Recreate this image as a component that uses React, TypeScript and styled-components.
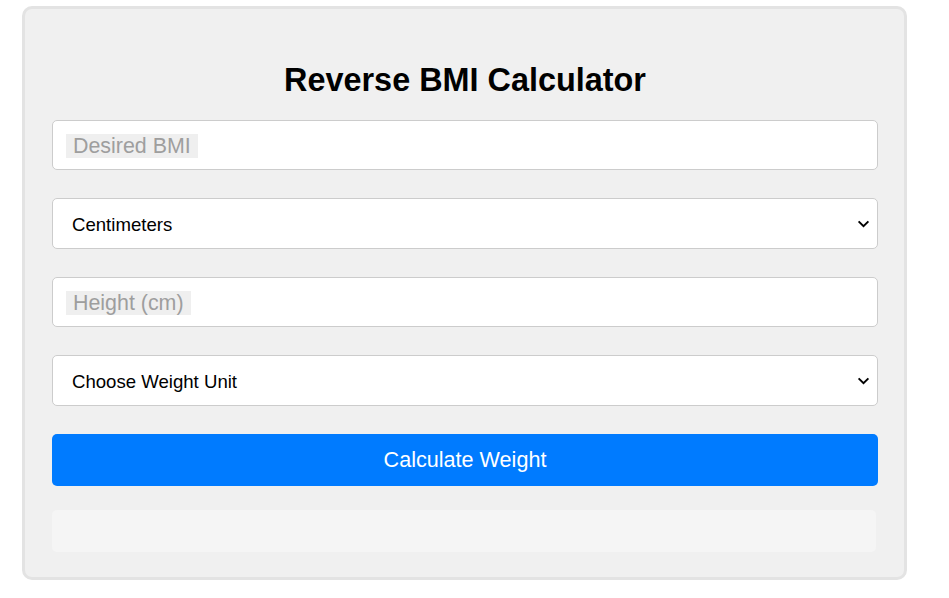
import React from "react";
import styled, { createGlobalStyle } from "styled-components";

const GlobalStyle = createGlobalStyle`
  html, body {
    margin: 0;
    padding: 0;
    background: #ffffff;
    font-family: "Liberation Sans", Arial, sans-serif;
  }
`;

const Page = styled.div`
  padding: 6px 0 0 22px;
`;

const Card = styled.div`
  box-sizing: border-box;
  width: 885px;
  background: #f0f0f0;
  border: 3px solid #e3e3e3;
  border-radius: 10px;
  padding: 30px 26px 25px 27px;
  display: flex;
  flex-direction: column;
`;

const Title = styled.h1`
  margin: 23px 0 21px;
  font-size: 32.4px;
  line-height: 37px;
  font-weight: 700;
  text-align: center;
  color: #000;
`;

const Form = styled.div`
  display: flex;
  flex-direction: column;
  gap: 28px;
`;

const TextInput = styled.input<{ $hint: number }>`
  box-sizing: border-box;
  width: 100%;
  height: 50px;
  padding: 2px 13px 0;
  border: 1px solid #cccccc;
  border-radius: 5px;
  background: #ffffff;
  font-family: "Liberation Sans", Arial, sans-serif;
  font-size: 21.4px;
  color: #000;
  outline: none;
  &::placeholder {
    color: #9e9e9e;
    padding-left: 7px;
    background: linear-gradient(#efefef, #efefef) no-repeat left center /
      ${(p) => p.$hint}px 24px;
  }
`;

const chevron =
  "url(\"data:image/svg+xml;utf8,<svg xmlns='http://www.w3.org/2000/svg' width='14' height='9' viewBox='0 0 14 9'><path d='M1.5 1.5 L7 7 L12.5 1.5' fill='none' stroke='black' stroke-width='2.2'/></svg>\")";

const Select = styled.select`
  box-sizing: border-box;
  width: 100%;
  height: 51px;
  padding: 1px 40px 0 19px;
  border: 1px solid #cccccc;
  border-radius: 5px;
  appearance: none;
  -webkit-appearance: none;
  background: #ffffff ${chevron} no-repeat right 7px center / 13px 8px;
  font-family: "Liberation Sans", Arial, sans-serif;
  font-size: 18.6px;
  color: #000;
  outline: none;
`;

const Button = styled.button`
  box-sizing: border-box;
  width: 100%;
  height: 52px;
  border: none;
  border-radius: 5px;
  background: #007bff;
  color: #ffffff;
  font-family: "Liberation Sans", Arial, sans-serif;
  font-size: 21.6px;
  cursor: pointer;
`;

const Result = styled.div<{ $empty?: boolean }>`
  margin-top: 24px;
  height: 42px;
  width: calc(100% - 2px);
  border-radius: 5px;
  background: ${(p) => (p.$empty ? "#f5f5f5" : "#e9f3ff")};
`;

export default function App() {
  return (
    <>
      <GlobalStyle />
      <Page>
        <Card>
          <Title>Reverse BMI Calculator</Title>
          <Form>
            <TextInput type="number" placeholder="Desired BMI" $hint={132} />
            <Select defaultValue="cm">
              <option value="cm">Centimeters</option>
              <option value="in">Inches</option>
            </Select>
            <TextInput type="number" placeholder="Height (cm)" $hint={125} />
            <Select defaultValue="">
              <option value="">Choose Weight Unit</option>
              <option value="kg">Kilograms</option>
              <option value="lb">Pounds</option>
            </Select>
            <Button>Calculate Weight</Button>
          </Form>
          <Result $empty />
        </Card>
      </Page>
    </>
  );
}
